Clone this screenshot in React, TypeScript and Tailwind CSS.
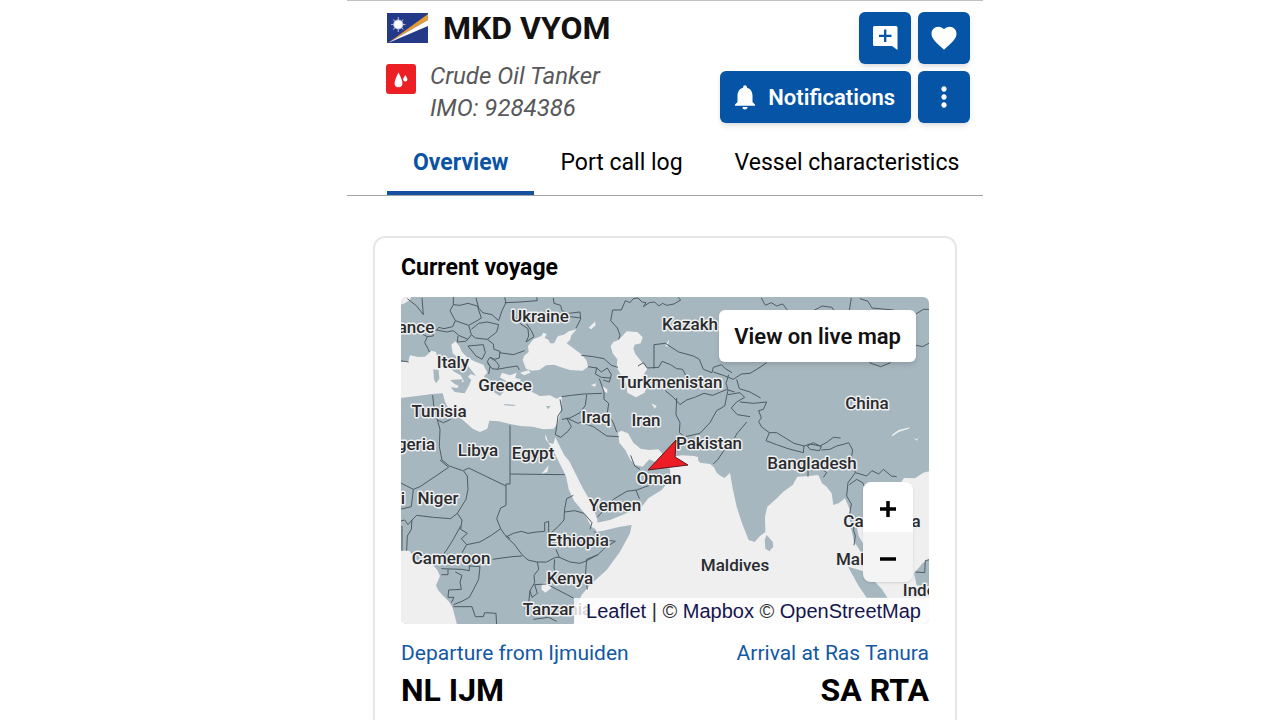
import React from "react";
import { MdFavorite, MdMoreVert, MdNotifications } from "react-icons/md";

const tabs = ["Overview", "Port call log", "Vessel characteristics"];

const labels = [
  { name: "Ukraine", x: 140, y: 26 },
  { name: "ance", x: 16, y: 37 },
  { name: "Kazakh", x: 290, y: 34 },
  { name: "Italy", x: 53, y: 72 },
  { name: "Greece", x: 105, y: 95 },
  { name: "Turkmenistan", x: 270, y: 92 },
  { name: "Tunisia", x: 39, y: 121 },
  { name: "Iraq", x: 196, y: 127 },
  { name: "Iran", x: 246, y: 130 },
  { name: "China", x: 467, y: 113 },
  { name: "geria", x: 16, y: 154 },
  { name: "Libya", x: 78, y: 160 },
  { name: "Egypt", x: 133, y: 163 },
  { name: "Pakistan", x: 309, y: 153 },
  { name: "Bangladesh", x: 412, y: 173 },
  { name: "Oman", x: 259, y: 188 },
  { name: "i", x: 3, y: 208 },
  { name: "Niger", x: 38, y: 208 },
  { name: "Yemen", x: 215, y: 215 },
  { name: "Cambodia", x: 482, y: 231 },
  { name: "Ethiopia", x: 178, y: 250 },
  { name: "Cameroon", x: 51, y: 268 },
  { name: "Maldives", x: 335, y: 275 },
  { name: "Malaysia", x: 470, y: 269 },
  { name: "Kenya", x: 170, y: 288 },
  { name: "Indonesia", x: 540, y: 300 },
  { name: "Tanzania", x: 157, y: 319 },
];

const seas = [
  // Mediterranean
  "M0 198 L25 196 30 178 55 183 75 182 95 164 108 168 114 192 130 206 150 214 160 226 182 238 192 256 182 262 172 276 152 274 164 288 194 292 206 270 214 252 204 242 212 234 228 240 206 212 186 196 158 172 154 146 166 136 178 150 186 168 204 186 228 198 250 206 262 230 252 240 262 264 276 276 284 290 300 300 312 286 302 262 320 256 300 244 306 230 330 238 350 230 346 246 364 250 348 262 368 272 390 262 396 288 420 300 450 298 470 308 486 300 482 350 472 384 460 398 430 400 398 392 362 390 330 384 296 376 268 374 262 398 240 408 218 398 186 370 154 350 136 320 128 292 96 294 50 300 0 306Z",
  // Black Sea and Marmara
  "M368 192 L372 180 386 168 384 150 400 130 424 120 430 110 440 114 434 126 446 132 450 142 462 142 474 120 492 116 506 106 530 100 514 118 510 132 500 142 524 160 546 176 560 194 564 212 548 224 510 222 490 216 462 206 438 208 418 222 396 224 378 218Z",
  "M360 230 L386 222 392 230 372 238Z",
  // North Sea corner
  "M0 0 L34 0 30 12 14 22 0 26Z",
  // Caspian
  "M656 132 L680 106 712 108 728 124 722 142 704 146 700 158 706 174 730 204 742 218 732 234 744 262 734 290 708 304 682 290 678 260 662 236 650 214 652 190 638 172 632 150 640 138Z",
  // Persian Gulf
  "M654 410 L664 404 684 412 700 440 722 458 748 462 776 460 790 478 800 500 770 500 748 490 728 512 704 506 690 490 676 462 658 440Z",
  // Red Sea
  "M436 414 L446 440 460 444 466 424 478 448 492 476 508 496 530 540 548 576 574 620 592 670 592 702 574 692 552 650 522 614 506 580 498 540 484 512 466 476 450 448 436 428Z",
  // Gulf of Guinea
  "M0 764 L28 764 44 786 62 802 92 800 112 822 120 840 108 868 114 882 130 900 148 918 158 936 166 966 172 990 0 990Z",
  // Indian Ocean
  "M765 484 L800 486 845 478 885 480 900 500 930 504 942 514 950 530 962 540 974 546 990 530 998 577 1010 632 1026 682 1046 732 1064 738 1080 720 1096 708 1095 662 1102 632 1125 612 1150 587 1178 567 1192 542 1225 540 1255 537 1266 562 1280 572 1295 592 1300 627 1316 622 1335 607 1350 642 1352 692 1362 736 1390 780 1396 754 1376 720 1364 665 1400 680 1450 700 1490 650 1450 600 1482 560 1502 560 1512 546 1545 547 1570 530 1600 522 1600 990 520 990 528 940 544 898 570 867 620 822 660 767 690 712 695 687 660 692 610 704 590 707 582 690 590 680 630 672 690 647 725 632 745 607 785 582 812 548 810 520 785 505Z",
  // lakes
  "M796 148 L808 130 802 154Z",
  "M566 95 L586 76 586 88 574 100Z",
  "M754 322 L770 330 764 338Z",
  "M572 268 L588 262 586 272Z",
  "M606 270 L622 280 622 292 610 284Z",
  "M426 864 L452 852 454 876 436 890 424 880Z",
  "M436 520 L446 508 442 528 424 534Z",
  "M1474 418 L1496 402 1530 394 1526 398 1496 408 1478 420Z",
  "M1540 426 L1552 430 1556 418 1552 434Z",
  "M846 482 L894 482 894 494 840 496Z",
];

const islands = [
  "M100 220 L116 222 118 248 108 262 102 250Z",
  "M150 252 L188 250 182 272 164 264Z",
  "M312 324 L348 327 340 330 314 328Z",
  "M438 330 L452 330 444 340Z",
  "M1100 717 L1118 737 1120 752 1108 766 1096 758 1094 732Z",
  "M1344 812 L1386 824 1420 852 1446 880 1462 905 1400 905 1376 870Z",
  "M1542 832 L1568 802 1600 780 1600 872 1550 868Z",
];

const borders = [
  // Europe
  "M22 8 L50 30 70 56 66 6",
  "M160 2 L160 26 150 44 166 74 206 88 228 76 244 66 232 30 204 22 180 28 160 26",
  "M228 6 L236 36 248 50 276 56 296 74 306 44 318 20 314 4",
  "M166 74 L158 92 132 98 116 94 110 102 140 108 160 104 176 118 204 130 214 116 206 88",
  "M214 100 L236 82 262 78 296 86 290 108 262 130 226 126 214 116",
  "M76 98 L70 116 82 122 74 140 84 158 88 168",
  "M110 102 L96 104 100 120 82 122",
  "M174 120 L172 138 196 136 204 130",
  "M204 150 L250 146 256 170 246 190 228 180Z",
  "M262 130 L280 144 282 160 300 166 298 186 284 190 270 184 262 196 270 212 266 234",
  "M298 170 L340 176 374 164",
  "M270 184 L288 196 298 210 292 220 276 218 262 200",
  "M292 220 L324 214 352 210 358 222",
  "M330 44 L362 84 384 98 386 120 378 138 402 122 394 104 380 84",
  "M314 20 L360 18 412 14 410 4",
  "M460 6 L462 22 482 28 486 44 506 52 540 48 542 70 528 96",
  // Black Sea to Central Asia
  "M484 302 L514 298 552 294 606 292",
  "M480 310 L486 342 474 360 470 392 466 416 482 424 504 406 514 392 500 366 534 382 544 378",
  "M486 370 L510 366 540 350 556 328 560 296",
  "M544 178 L580 182 612 188 634 208 654 214",
  "M564 212 L590 216 586 234 604 244 630 246",
  "M588 214 L604 228 622 216 634 236 628 258 610 252",
  "M598 248 L612 288 612 310 626 322 622 352 640 380 650 408",
  "M542 378 L580 392 620 420 656 422",
  "M510 62 L542 66",
  "M656 130 L660 118 652 96 632 74 638 42 664 42 676 14 690 20 700 8 714 6 726 18 738 20 730 32 748 20 764 18 776 30 788 22 800 28 822 24 842 12 834 4",
  "M762 218 L762 146 796 142 836 168 880 180 898 190 910 220 936 230 940 214 964 206 976 218 996 230",
  "M714 210 L730 200 742 216 776 214 786 196 812 206 830 218 848 220 858 240",
  "M796 284 L820 304 840 326 860 312 884 304 912 292 938 298 962 288 982 280",
  "M830 306 L828 356 840 380 838 410 856 424",
  "M856 422 L900 412 930 380 950 344 974 330 984 282 1004 288",
  "M984 296 L1020 290 1034 304 1010 318 994 336 1012 356 1050 362",
  "M1040 378 L1010 414 996 440 974 460 954 490 940 504",
  "M940 228 L970 238 1000 250 1024 234 1050 232 1080 214 1100 200",
  "M1010 250 L1018 278 1050 288 1082 306",
  "M986 236 L978 262 984 282",
  // China and Himalaya
  "M1084 6 L1096 28 1114 20 1130 30 1148 24 1162 42",
  "M1234 48 L1266 30 1296 34 1302 44",
  "M1348 44 L1354 6",
  "M1380 8 L1404 16 1416 36 1480 42 1510 52",
  "M1548 54 L1570 40 1600 40",
  "M1540 146 L1568 152 1600 134",
  "M1408 200 L1442 212 1472 200",
  "M1020 318 L1060 322 1100 318 1090 340 1076 344 1084 366 1076 376 1084 392 1108 410 1130 410 1156 426 1182 442 1212 450 1230 444 1260 450 1282 438 1300 424 1322 426",
  "M1108 410 L1098 434 1130 446 1164 458 1210 470 1212 450",
  "M1222 450 L1240 440 1264 452 1258 464 1230 460Z",
  "M1264 462 L1290 460 1310 450 1334 444 1346 440 1358 462 1354 486",
  "M1224 478 L1224 542",
  "M1270 544 L1280 530 1268 520",
  "M1356 486 L1366 530 1344 560 1340 600 1354 624 1348 660 1362 700",
  "M1366 530 L1400 540 1416 524 1436 534 1450 520 1474 540 1490 542",
  "M1348 566 L1370 550 1388 560 1396 576",
  "M1360 700 L1366 720 1362 748",
  "M1546 828 L1574 830 1576 794 1600 788",
  // Africa
  "M0 194 L26 198",
  "M98 298 L102 336 112 372 130 380 152 370",
  "M112 372 L120 400 118 452 126 492 148 510 188 524",
  "M330 388 L330 534 494 536",
  "M330 534 L330 564 318 564 318 628 302 636 290 668 302 698",
  "M318 570 L206 516 190 524 202 540 204 580 198 610 172 652",
  "M120 492 L146 514 60 572 40 580 0 560",
  "M40 580 L34 632 0 640",
  "M172 652 L152 668 100 664 50 658 36 672 34 700 22 720 20 764",
  "M0 676 L14 672 24 686 36 672",
  "M6 764 L6 690",
  "M172 652 L186 672 182 700 202 712 184 728 200 746 240 738 274 718 302 698 314 716 330 728",
  "M182 690 L160 730 140 762 124 782",
  "M200 746 L186 770",
  "M316 720 L342 744 366 776 384 792 410 798 440 798 466 784 478 784 468 760",
  "M320 722 L340 712 364 706 384 712 410 708 434 706 434 680 446 676 446 712",
  "M278 790 L306 786 336 782 366 780",
  "M478 784 L510 798 540 802 560 794 594 776 614 756 646 736 606 730 582 706",
  "M448 716 L476 690 492 672 494 638 500 608 520 598",
  "M494 648 L524 644 552 652 576 680 570 700",
  "M594 776 L560 790 556 840 562 880",
  "M124 818 L186 820 208 824 208 808",
  "M124 836 L144 836 144 820",
  "M208 810 L240 812 236 850 222 878 208 904 186 916 160 926",
  "M166 828 L186 838 180 858 184 880 146 882 144 904 162 904 154 920",
  "M160 932 L216 932 226 962 250 962 254 950 288 952 290 990",
  "M412 798 L416 820 402 838 404 860 390 884 396 904 412 892 404 866 440 864",
  "M464 790 L462 816 470 836",
  "M440 864 L520 906",
  "M390 884 L386 920 374 938",
  "M400 970 L446 964 470 976",
  // Arabia
  "M692 478 L704 510 720 520",
  "M592 664 L640 610 680 586 710 582 770 560",
  "M708 582 L718 608",
];

const Flag = () => (
  <svg
    viewBox="0 0 40 30"
    preserveAspectRatio="none"
    className="h-[30px] w-[41px] shrink-0"
    aria-label="Marshall Islands"
  >
    <rect width="40" height="30" fill="#243a86" />
    <path d="M1 30 L40 1 V7Z" fill="#e59a35" />
    <path d="M1 30 L40 7 V13Z" fill="#ffffff" />
    <path
      d="M11 4V19M4 11.500H18M6 6.500l10 10M16 6.500l-10 10"
      stroke="#aebbe0"
      strokeWidth="1"
    />
    <circle cx="11" cy="11.500" r="5" fill="#aebbe0" />
    <circle cx="11" cy="11.500" r="4" fill="#ffffff" />
  </svg>
);

const TankerIcon = () => (
  <svg viewBox="0 0 30 30" className="h-[30px] w-[30px] shrink-0">
    <rect width="30" height="30" rx="3" fill="#ec2024" />
    <path
      d="M12.500 8.500 C12.500 8.500 8.600 15.500 8.600 19.200 A3.900 4 0 0 0 16.400 19.200 C16.400 15.500 12.500 8.500 12.500 8.500Z"
      fill="#fff"
    />
    <path
      d="M19.300 11 C19.300 11 17.200 14 17.200 15.400 A2.100 2.100 0 0 0 21.400 15.400 C21.400 14 19.300 11 19.300 11Z"
      fill="#fff"
    />
  </svg>
);

const AddNoteIcon = () => (
  <svg viewBox="0 0 26 26" className="h-[26px] w-[26px]">
    <path
      d="M2.500 1 H24 A1.500 1.500 0 0 1 25.500 2.500 V25 L20 21 H2.500 A1.500 1.500 0 0 1 1 19.500 V2.500 A1.500 1.500 0 0 1 2.500 1Z"
      fill="#fff"
    />
    <path d="M13.200 4.500V17M7 10.800H19.500" stroke="#0554a6" strokeWidth="2.300" />
  </svg>
);

const VoyageMap = () => (
  <svg
    viewBox="1 1 528 327"
    preserveAspectRatio="xMidYMid slice"
    className="block h-full w-full bg-[#a6b7bf]"
  >
    <g transform="scale(0.33333)">
      {seas.map((d) => (
        <path key={d} d={d} fill="#efefef" />
      ))}
      {islands.map((d) => (
        <path key={d} d={d} fill="#a6b7bf" />
      ))}
      {borders.map((d) => (
        <path
          key={d}
          d={d}
          fill="none"
          stroke="#4f5b63"
          strokeWidth="3"
          strokeLinejoin="round"
        />
      ))}
    </g>
    <g
      fontFamily="Roboto, sans-serif"
      fontSize="17"
      fontWeight="500"
      fill="#2b2b2e"
      stroke="#eef0f1"
      strokeWidth="3"
      strokeLinejoin="round"
      paintOrder="stroke"
      textAnchor="middle"
    >
      {labels.map((label) => (
        <text key={label.name} x={label.x} y={label.y}>
          {label.name}
        </text>
      ))}
    </g>
    <path
      d="M248 174 L276 144 275 161 288 169Z"
      fill="#ee1c25"
      stroke="#5c1a1c"
      strokeWidth="1"
    />
  </svg>
);

const actionButton =
  "flex h-[52px] items-center justify-center rounded-md bg-[#0554a6] text-white shadow-md";

const App = () => {
  return (
    <div className="h-screen overflow-hidden bg-white pl-[50px] font-[Roboto,sans-serif] text-black">
      <main className="mx-auto flex h-full max-w-[636px] flex-col overflow-hidden border-t border-[#c4c0c0]">
        {/* Vessel header */}
        <header className="flex justify-between pt-[11px] pr-[13px] pl-10">
          <div>
            <div className="flex h-8 items-center gap-[15px]">
              <Flag />
              <h1 className="text-[32px] leading-8 font-bold text-[#141112]">
                MKD VYOM
              </h1>
            </div>
            <div className="mt-4 flex gap-[14px]">
              <div className="-ml-px pt-1">
                <TankerIcon />
              </div>
              <p className="text-[24px] leading-8 text-[#58585a] italic">
                Crude Oil Tanker
                <br />
                IMO: 9284386
              </p>
            </div>
          </div>

          <div className="flex flex-col items-end gap-[7px]">
            <div className="flex gap-[7px]">
              <button className={`${actionButton} w-[52px]`} aria-label="Add note">
                <AddNoteIcon />
              </button>
              <button className={`${actionButton} w-[52px]`} aria-label="Favorite">
                <MdFavorite size={30} />
              </button>
            </div>
            <div className="flex gap-[7px]">
              <button
                className={`${actionButton} gap-2 pr-4 pl-[10px] text-[22px] font-semibold`}
              >
                <MdNotifications size={30} />
                Notifications
              </button>
              <button className={`${actionButton} w-[52px]`} aria-label="More">
                <MdMoreVert size={32} />
              </button>
            </div>
          </div>
        </header>

        {/* Tabs */}
        <nav className="mt-[11px] flex shrink-0 overflow-hidden border-b border-[#a3a3a5] pl-10">
          {tabs.map((tab, i) => (
            <button
              key={tab}
              className={
                i === 0
                  ? "h-[60px] shrink-0 border-b-4 border-[#1650a0] px-[26px] text-[23px] font-bold text-[#0b53a5]"
                  : "h-[60px] shrink-0 border-b-4 border-transparent px-[26px] text-[23px]"
              }
            >
              {tab}
            </button>
          ))}
        </nav>

        {/* Current voyage card */}
        <section className="mx-[26px] mt-10 flex-1 rounded-t-xl border-2 border-b-0 border-[#e6e7e8] px-[26px] pt-[14px]">
          <h2 className="text-[23px] leading-8 font-bold">Current voyage</h2>

          <div className="relative mt-[13px] h-[327px] overflow-hidden rounded-md">
            <VoyageMap />
            <button className="absolute top-[13px] right-[13px] h-[52px] rounded-md bg-white px-[15px] text-[22px] font-semibold text-[#141112] shadow-md">
              View on live map
            </button>
            <div className="absolute right-4 bottom-[42px] flex w-[50px] flex-col overflow-hidden rounded-lg shadow-sm">
              <button
                className="flex h-[50px] items-center justify-center bg-white pt-1"
                aria-label="Zoom in"
              >
                <svg viewBox="0 0 16 16" className="h-4 w-4">
                  <path d="M8 0V16M0 8H16" stroke="#000" strokeWidth="3.500" />
                </svg>
              </button>
              <button
                className="flex h-[50px] items-center justify-center bg-[#f4f4f4] pt-1"
                aria-label="Zoom out"
              >
                <svg viewBox="0 0 16 16" className="h-4 w-4">
                  <path d="M0 8H16" stroke="#000" strokeWidth="3.500" />
                </svg>
              </button>
            </div>
            <div className="absolute right-0 bottom-0 bg-white/80 pr-2 pl-3 font-['Liberation_Sans',sans-serif] text-[20px] leading-[26px] text-[#333]">
              <a href="#leaflet" className="text-[#15164f]">Leaflet</a> | ©{" "}
              <a href="#mapbox" className="text-[#15164f]">Mapbox</a> ©{" "}
              <a href="#osm" className="text-[#15164f]">OpenStreetMap</a>
            </div>
          </div>

          <div className="mt-4 flex justify-between">
            <div>
              <p className="text-[21px] leading-[26px] text-[#1258a5]">
                Departure from Ijmuiden
              </p>
              <p className="mt-1 text-[32px] leading-10 font-bold">NL IJM</p>
            </div>
            <div className="text-right">
              <p className="text-[21px] leading-[26px] text-[#1258a5]">
                Arrival at Ras Tanura
              </p>
              <p className="mt-1 text-[32px] leading-10 font-bold">SA RTA</p>
            </div>
          </div>
        </section>
      </main>
    </div>
  );
};

export default App;
